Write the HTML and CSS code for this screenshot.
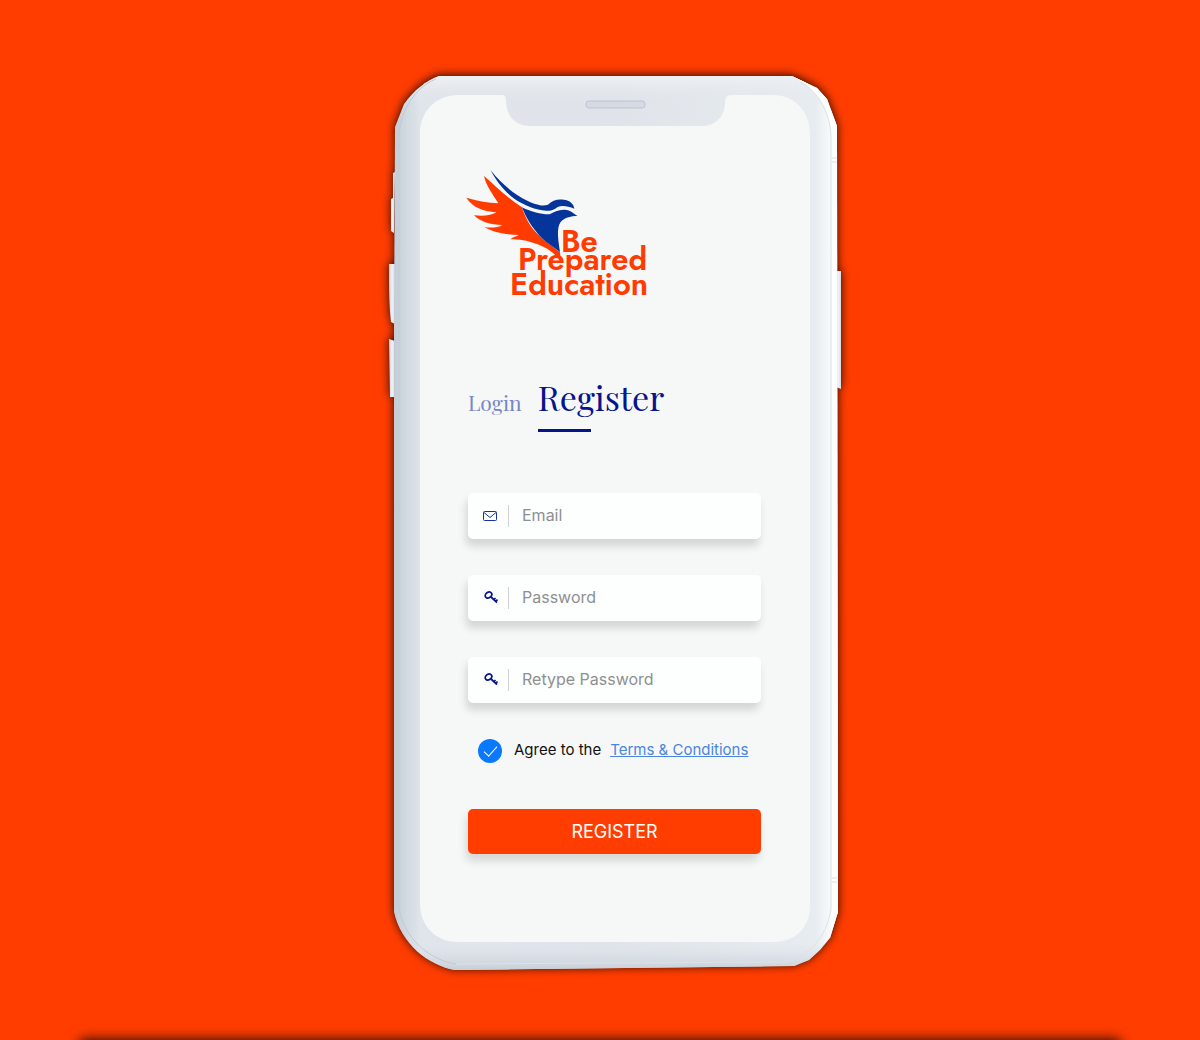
FILE: index.html
```html
<!DOCTYPE html>
<html lang="en">
<head>
<meta charset="utf-8">
<meta name="viewport" content="width=device-width, initial-scale=1">
<title>Be Prepared Education – Register</title>
<link rel="stylesheet" href="styles.css">
</head>
<body>
<div class="page">
  <main class="phone">
    <svg class="device" viewBox="389 76 452 894" preserveAspectRatio="none" aria-hidden="true">
      <defs>
        <linearGradient id="shell" x1="0" x2="1" y1="0" y2="0">
          <stop offset="0" stop-color="#c3ccd5"/>
          <stop offset=".03" stop-color="#d3dae2"/>
          <stop offset=".06" stop-color="#e0e4eb"/>
          <stop offset=".5" stop-color="#e0e4ea"/>
          <stop offset=".95" stop-color="#e7ecf0"/>
          <stop offset=".98" stop-color="#f6f9fa"/>
          <stop offset="1" stop-color="#fdfefe"/>
        </linearGradient>
        <linearGradient id="shade" x1="0" x2="0" y1="0" y2="1">
          <stop offset="0" stop-color="#eef2f5"/>
          <stop offset=".03" stop-color="#e2e6eb" stop-opacity="0"/>
          <stop offset=".97" stop-color="#dfe4ec" stop-opacity="0"/>
          <stop offset="1" stop-color="#c6ced5"/>
        </linearGradient>
        <linearGradient id="key" x1="0" x2="1" y1="0" y2="0">
          <stop offset="0" stop-color="#c5ccd8"/>
          <stop offset=".5" stop-color="#f0f2f7"/>
          <stop offset="1" stop-color="#d5dae3"/>
        </linearGradient>
      </defs>
      <g class="device-body">
        <path fill="url(#key)" d="M395 172l-2 1v25l-2 1v32l3 2zM395 264h-6c0 24 0 40 2 58l4 2zM395 341l-6-2 1 58h5z"/>
        <path fill="url(#key)" d="M836 271h5v118l-5-2z"/>
        <path fill="url(#shell)" d="M439 76H792L817 88 827 99 837 126 838 912 830 938 820 950 809 960 794 966 455 970C428 965 401 944 394 912L394 330 395 127 404 104C414 90 426 81 439 76z"/>
        <path fill="url(#shade)" d="M439 76H792L817 88 827 99 837 126 838 912 830 938 820 950 809 960 794 966 455 970C428 965 401 944 394 912L394 330 395 127 404 104C414 90 426 81 439 76z"/>
        <path fill="#fdfefe" d="M792 76L817 88 827 99 837 126 838 912 830 938C832 920 832 912 832 900V138C831 110 818 90 792 76z"/>
      </g>
      <path fill="none" stroke="#c1cbd3" d="M436 79C414 88 400 112 399 136V908C404 939 430 960 456 964"/>
      <path fill="none" stroke="#dce2e8" d="M800 82C820 92 831 116 831 138V908C827 938 808 957 785 962L456 964M832 158h5M832 162h5M832 878h5M832 882h5"/>
      <path fill="#f6f7f7" d="M458 95H502Q506 95 506 100C506 116 515 126 530 126H702C716 126 725 116 725 102Q725 95 731 95H773C795 95 810 112 810 134V906C810 928 795 942 773 942H458C436 942 420 926 420 904V134C420 111 436 95 458 95z"/>
      <rect x="586" y="101" width="59" height="7" rx="3" fill="#d5dae3" stroke="#bcc5d1"/>
    </svg>

    <div class="screen">
      <svg class="logo" viewBox="16 8 190 132" role="img" aria-label="Be Prepared Education">
        <g transform="scale(.3333)">
          <path fill="#05349a" d="M122 31C158 76 194 103 232 122C262 136 278 139 294 134C306 121 324 116 341 119C360 121 371 131 373 146C354 138 335 136 323 141C310 150 305 154 288 152C258 150 222 136 193 116C161 93 139 63 122 31z"/>
          <path fill="#ff3b00" d="M102 48C137 78 169 111 216 142C230 187 248 208 267 226C288 248 309 260 330 277L333 305C316 280 290 263 263 253C239 244 212 236 181 238C190 231 200 229 206 225C170 225 130 217 103 202C127 204 147 202 157 195C121 195 91 185 72 166C98 169 125 167 139 157C97 153 69 143 49 113C84 124 116 128 145 130C127 101 109 78 102 48z"/>
          <path fill="#05349a" d="M216 142C246 157 277 164 299 163C311 155 327 148 344 149C363 150 369 161 383 167C362 169 347 172 337 181C320 194 322 225 330 276C309 259 285 246 266 224C241 195 229 174 216 142z"/>
        </g>
        <g class="logo-text">
          <text x="111" y="92">Be</text>
          <text x="68" y="110">Prepared</text>
          <text x="60" y="135">Education</text>
        </g>
      </svg>

      <nav class="tabs">
        <a class="tab" href="#login">Login</a>
        <a class="tab tab-active" href="#register" aria-current="page">Register</a>
      </nav>

      <form class="form">
        <label class="field">
          <svg class="icon" viewBox="0 0 16 16" aria-hidden="true"><rect x="1.5" y="3.500" width="13" height="9" rx="1"/><path d="M2 4.500L8 9.500L14 4.500"/></svg>
          <input type="email" placeholder="Email" aria-label="Email">
        </label>
        <label class="field">
          <svg class="icon icon-key" viewBox="0 0 16 16" aria-hidden="true"><ellipse cx="6.500" cy="5" rx="3.500" ry="2.700" transform="rotate(-35 6.500 5)"/><path d="M9 7L15 12.500M11.500 10l2-2M13.500 11.500l2-2"/></svg>
          <input type="password" placeholder="Password" aria-label="Password">
        </label>
        <label class="field">
          <svg class="icon icon-key" viewBox="0 0 16 16" aria-hidden="true"><ellipse cx="6.500" cy="5" rx="3.500" ry="2.700" transform="rotate(-35 6.500 5)"/><path d="M9 7L15 12.500M11.500 10l2-2M13.500 11.500l2-2"/></svg>
          <input type="password" placeholder="Retype Password" aria-label="Retype Password">
        </label>
        <div class="agree">
          <input class="check" type="checkbox" id="agree" checked>
          <label for="agree">Agree to the</label>
          <a href="#terms">Terms &amp; Conditions</a>
        </div>
        <button class="submit" type="submit">REGISTER</button>
      </form>
    </div>
  </main>
  <div class="next-panel"></div>
</div>
</body>
</html>
```

FILE: styles.css
```css
* { box-sizing: border-box; }

body {
  margin: 0;
  background: #ff3d00;
  font-family: Inter, "Liberation Sans", sans-serif;
}

.page {
  display: flex;
  flex-direction: column;
  align-items: center;
  min-height: 100vh;
  padding-top: 76px;
  overflow: hidden;
}

.phone {
  position: relative;
  width: 100%;
  max-width: 452px;
  min-height: 894px;
  margin-left: 30px;
  margin-bottom: 70px;
}

.device {
  position: absolute;
  inset: 0;
  width: 100%;
  height: 100%;
  overflow: visible;
}

.device-body { filter: drop-shadow(0 -1px 5px rgba(0, 0, 0, .85)); }

.screen {
  position: relative;
  display: flex;
  flex-direction: column;
  padding: 92px 80px 116px 79px;
}

.logo {
  width: 190px;
  height: 132px;
  margin-left: -2px;
  overflow: visible;
}

.logo-text {
  fill: #ff3b00;
  font: 600 31px Jost, "Century Gothic", Lato, sans-serif;
  font-variant-ligatures: none;
}

.tabs {
  display: flex;
  align-items: baseline;
  gap: 16px;
  margin: 75px 0 61px;
  font-family: "Playfair Display", "Liberation Serif", serif;
}

.tab {
  color: #7688c4;
  font-size: 21px;
  line-height: 44px;
  text-decoration: none;
}

.tab-active {
  color: #06148c;
  font-size: 34px;
}

.tab-active::after {
  content: "";
  display: block;
  width: 53px;
  height: 3px;
  margin-top: 10px;
  background: #06148c;
}

.form {
  display: flex;
  flex-direction: column;
  gap: 36px;
}

.field {
  display: flex;
  align-items: center;
  height: 46px;
  padding: 0 14px;
  border-radius: 5px;
  background: #fdfefe;
  box-shadow: -2px 7px 8px rgba(0, 0, 0, .14);
}

.icon {
  flex: none;
  width: 16px;
  height: 16px;
  fill: none;
  stroke: #1a2fa0;
}

.icon-key {
  stroke: #06148c;
  stroke-width: 1.7;
}

.field input {
  flex: 1;
  min-width: 0;
  height: 22px;
  margin-left: 10px;
  padding: 0 0 2px 13px;
  border: 0;
  border-left: 1px solid #cfd2d2;
  background: none;
  color: #333;
  font: 16px Inter, sans-serif;
  outline: 0;
}

.field input::placeholder {
  color: #8e9090;
  opacity: 1;
}

.agree {
  display: flex;
  align-items: center;
  height: 24px;
  padding-left: 10px;
  color: #111;
  font-size: 15px;
  white-space: nowrap;
}

.agree label,
.agree a { padding-bottom: 3px; }

.agree a {
  margin-left: 9px;
  color: #4a86e0;
}

.check {
  appearance: none;
  display: grid;
  place-items: center;
  flex: none;
  width: 24px;
  height: 24px;
  margin: 0 12px 0 0;
  border-radius: 50%;
  background: #fff;
}

.check:checked { background: #0a78ff; }

.check:checked::after {
  content: "";
  width: 6px;
  height: 12px;
  margin-bottom: 3px;
  border: solid #fff;
  border-width: 0 1px 1px 0;
  transform: rotate(42deg);
}

.submit {
  height: 45px;
  margin-top: 10px;
  border: 0;
  border-radius: 5px;
  background: #ff3d00;
  box-shadow: -2px 7px 8px rgba(0, 0, 0, .13);
  color: #fff;
  font: 18px Inter, sans-serif;
}

.next-panel {
  width: calc(100% - 160px);
  height: 40px;
  margin-bottom: -40px;
  background: #ff3d00;
  box-shadow: 0 0 12px rgba(0, 0, 0, .95);
}
```
